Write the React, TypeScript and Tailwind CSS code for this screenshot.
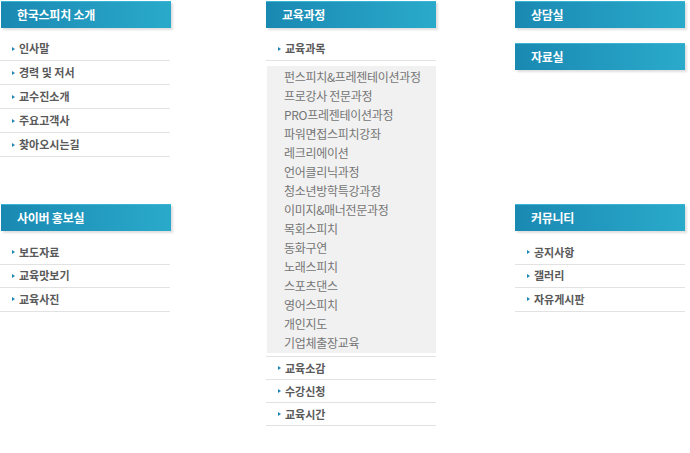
const font = { fontFamily: '"Noto Sans CJK KR", "Noto Sans", sans-serif' }

const introMenu = ["인사말", "경력 및 저서", "교수진소개", "주요고객사", "찾아오시는길"]
const prMenu = ["보도자료", "교육맛보기", "교육사진"]
const courseList = [
  "펀스피치&프레젠테이션과정",
  "프로강사 전문과정",
  "PRO프레젠테이션과정",
  "파워면접스피치강좌",
  "레크리에이션",
  "언어클리닉과정",
  "청소년방학특강과정",
  "이미지&매너전문과정",
  "목회스피치",
  "동화구연",
  "노래스피치",
  "스포츠댄스",
  "영어스피치",
  "개인지도",
  "기업체출장교육",
]
const courseMenu = ["교육소감", "수강신청", "교육시간"]
const communityMenu = ["공지사항", "갤러리", "자유게시판"]

function Header({ title, className = "" }: { title: string; className?: string }) {
  return (
    <div
      className={`w-[170px] h-[27px] flex items-center pl-[16px] bg-gradient-to-r from-[#1a89b2] to-[#2aaacb] border-t border-[#3cb4d4] shadow-[2px_2px_2px_rgba(0,0,0,0.13)] ${className}`}
    >
      <span className="text-white text-[12px] font-bold tracking-[-0.25px] leading-none">{title}</span>
    </div>
  )
}

function MenuRow({ label, h = "h-[24px]" }: { label: string; h?: string }) {
  return (
    <li className={`flex items-center ${h} border-b border-[#e2e2e2] pl-[12px]`}>
      <span className="w-0 h-0 border-y-[2px] border-y-transparent border-l-[3px] border-l-[#1d86b5]" />
      <span className="ml-[4px] text-[11px] font-bold text-[#595959] leading-none">{label}</span>
    </li>
  )
}

export default function App() {
  return (
    <div className="w-[690px] h-[453px] bg-white flex" style={font}>
      {/* left */}
      <div className="w-[171px] flex flex-col pt-[1px]">
        <Header title="한국스피치 소개" className="ml-[1px]" />
        <ul className="w-[170px] mt-[9px]">
          {introMenu.map((m) => (
            <MenuRow key={m} label={m} />
          ))}
        </ul>
        <Header title="사이버 홍보실" className="ml-[1px] mt-[47px]" />
        <ul className="w-[170px] mt-[10px]">
          {prMenu.map((m) => (
            <MenuRow key={m} label={m} h="h-[23.5px]" />
          ))}
        </ul>
      </div>

      {/* middle */}
      <div className="w-[170px] ml-[95px] flex flex-col pt-[1px]">
        <Header title="교육과정" />
        <ul className="mt-[9px]">
          <MenuRow label="교육과목" />
        </ul>
        <ul className="ml-[1px] mt-[5px] bg-[#f1f1f1] py-[1px]">
          {courseList.map((c) => (
            <li
              key={c}
              className="h-[19px] flex items-center pl-[17px] text-[12px] tracking-[-0.3px] text-[#757575] leading-none whitespace-nowrap"
            >
              {c}
            </li>
          ))}
        </ul>
        <ul className="mt-[3px] border-t border-[#e2e2e2]">
          {courseMenu.map((m) => (
            <MenuRow key={m} label={m} h="h-[23px]" />
          ))}
        </ul>
      </div>

      {/* right */}
      <div className="w-[172px] ml-[79px] flex flex-col pt-[1px]">
        <Header title="상담실" />
        <Header title="자료실" className="mt-[15px]" />
        <Header title="커뮤니티" className="mt-[134px]" />
        <ul className="w-[170px] mt-[10px]">
          {communityMenu.map((m) => (
            <MenuRow key={m} label={m} h="h-[23.5px]" />
          ))}
        </ul>
      </div>
    </div>
  )
}
